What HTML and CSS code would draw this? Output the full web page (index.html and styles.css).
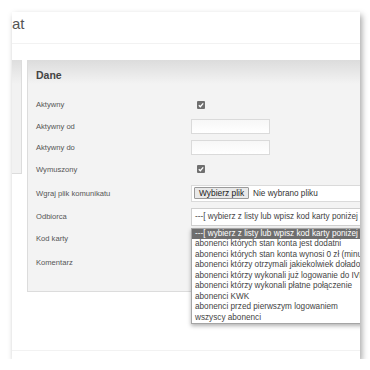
FILE: index.html
```html
<!DOCTYPE html>
<html lang="pl">
<head>
  <meta charset="UTF-8" />
  <meta name="viewport" content="width=device-width, initial-scale=1.0" />
  <title>Komunikat</title>
  <link rel="stylesheet" href="styles.css">
</head>
<body>

  <div class="window">
    <div class="title">at</div>
    <div class="toolbar"></div>

    <div class="content">
      <aside class="sidebar"></aside>

      <section class="panel">
        <h2 class="panel-head">Dane</h2>

        <div class="panel-body">
          <div class="row">
            <label>Aktywny</label>
            <div class="field">
              <span class="check"><svg viewBox="0 0 8 8" width="8" height="8"><path d="M1.8 4.3 L3.3 5.7 L6.2 2.4" fill="none" stroke="#fff" stroke-width="1.3"/></svg></span>
            </div>
          </div>
          <div class="row">
            <label>Aktywny od</label>
            <div class="field"><input class="text" type="text"></div>
          </div>
          <div class="row">
            <label>Aktywny do</label>
            <div class="field"><input class="text" type="text"></div>
          </div>
          <div class="row">
            <label>Wymuszony</label>
            <div class="field">
              <span class="check"><svg viewBox="0 0 8 8" width="8" height="8"><path d="M1.8 4.3 L3.3 5.7 L6.2 2.4" fill="none" stroke="#fff" stroke-width="1.3"/></svg></span>
            </div>
          </div>
          <div class="row row-file">
            <label>Wgraj plik komunikatu</label>
            <div class="field">
              <div class="file">
                <span class="file-btn">Wybierz plik</span>
                <span class="file-name">Nie wybrano pliku</span>
              </div>
            </div>
          </div>
          <div class="row">
            <label>Odbiorca</label>
            <div class="field">
              <div class="select">
                <div class="select-box">---[ wybierz z listy lub wpisz kod karty poniżej ]---</div>

                <!-- open dropdown -->
                <ul class="options">
                  <li class="selected">---[ wybierz z listy lub wpisz kod karty poniżej ]---</li>
                  <li>abonenci których stan konta jest dodatni</li>
                  <li>abonenci których stan konta wynosi 0 zł (minus)</li>
                  <li>abonenci którzy otrzymali jakiekolwiek doładowanie</li>
                  <li>abonenci którzy wykonali już logowanie do IVR</li>
                  <li>abonenci którzy wykonali płatne połączenie</li>
                  <li>abonenci KWK</li>
                  <li>abonenci przed pierwszym logowaniem</li>
                  <li>wszyscy abonenci</li>
                </ul>
              </div>
            </div>
          </div>
          <div class="row">
            <label>Kod karty</label>
            <div class="field"><input class="text" type="text"></div>
          </div>
          <div class="row row-tall">
            <label>Komentarz</label>
            <div class="field"></div>
          </div>
        </div>
      </section>
    </div>

    <div class="footer"></div>
  </div>

</body>
</html>
```

FILE: styles.css
```css
body {
  margin: 0;
  background: #fff;
  font-family: "Liberation Sans", Arial, sans-serif;
  color: #555;
}

.window {
  margin: 12px 0 0 12px;
  width: 348px;
  height: 347px;
  background: #fff;
  overflow: hidden;
  box-shadow: 2px 3px 6px rgba(0, 0, 0, 0.35);
}

.title {
  height: 31px;
  line-height: 24px;
  font-size: 15px;
  color: #555;
  border-bottom: 1px solid #f2f2f2;
}

.toolbar {
  height: 16px;
}

.content {
  display: flex;
  gap: 5px;
  height: 232px;
}

.sidebar {
  width: 9px;
  height: 113px;
  border-right: 1px solid #dcdcdc;
  border-bottom: 1px solid #dcdcdc;
  background: linear-gradient(#dedede, #f2f2f2 24px, #f2f2f2);
}

/* panel "Dane" */
.panel {
  flex: 1;
  min-width: 0;
  box-sizing: border-box;
  border-left: 1px solid #dcdcdc;
  border-bottom: 1px solid #dcdcdc;
  background: #f3f3f3;
}

.panel-head {
  margin: 0;
  height: 30px;
  line-height: 30px;
  padding-left: 8px;
  font-size: 10.5px;
  font-weight: bold;
  color: #444;
  background: linear-gradient(#dcdcdc, #f3f3f3 24px);
}

.panel-body {
  padding: 4px 0 0 8px;
}

.row {
  display: grid;
  grid-template-columns: 155px 1fr;
  align-items: center;
  height: 21.5px;
}

.row-file {
  height: 26px;
}

.row-tall {
  height: 26px;
}

.row label {
  font-size: 7.6px;
  color: #555;
}

.field {
  display: flex;
  align-items: center;
  white-space: nowrap;
}

.check {
  display: block;
  width: 8px;
  height: 8px;
  margin-left: 6px;
  border-radius: 1px;
  background: #6f6f6f;
}

.check svg {
  display: block;
}

.text {
  box-sizing: border-box;
  width: 79px;
  height: 15px;
  margin: 0;
  padding: 0;
  border: 1px solid #dadada;
  background: linear-gradient(#f7f7f7, #fff);
}

.file {
  display: flex;
  align-items: center;
  gap: 4px;
  box-sizing: border-box;
  width: 200px;
  height: 17px;
  padding-left: 2px;
  border: 1px solid #dadada;
  background: #fff;
  font-size: 8.2px;
  color: #333;
}

.file-btn {
  height: 12px;
  line-height: 11px;
  padding: 0 4px;
  box-sizing: border-box;
  border: 1px solid #9a9a9a;
  border-radius: 1px;
  background: #e9e9e9;
  color: #222;
  font-size: 8.4px;
}

.select {
  position: relative;
}

.select-box {
  box-sizing: border-box;
  width: 200px;
  height: 18px;
  line-height: 16px;
  padding-left: 3px;
  border: 1px solid #cfcfcf;
  background: #fff;
  font-size: 8.2px;
  color: #444;
  overflow: hidden;
}

.options {
  position: absolute;
  top: 20px;
  left: 0;
  width: 200px;
  margin: 0;
  padding: 0;
  list-style: none;
  border: 1px solid #a5a5a5;
  background: #fff;
  box-shadow: 0 2px 4px rgba(0, 0, 0, 0.3);
  z-index: 5;
}

.options li {
  height: 10.5px;
  line-height: 10.5px;
  padding-left: 3px;
  font-size: 8.2px;
  color: #444;
  overflow: hidden;
}

.options li.selected {
  background: #6e6e6e;
  color: #fff;
}

.footer {
  height: 58px;
  border-bottom: 1px solid #f2f2f2;
}
```
